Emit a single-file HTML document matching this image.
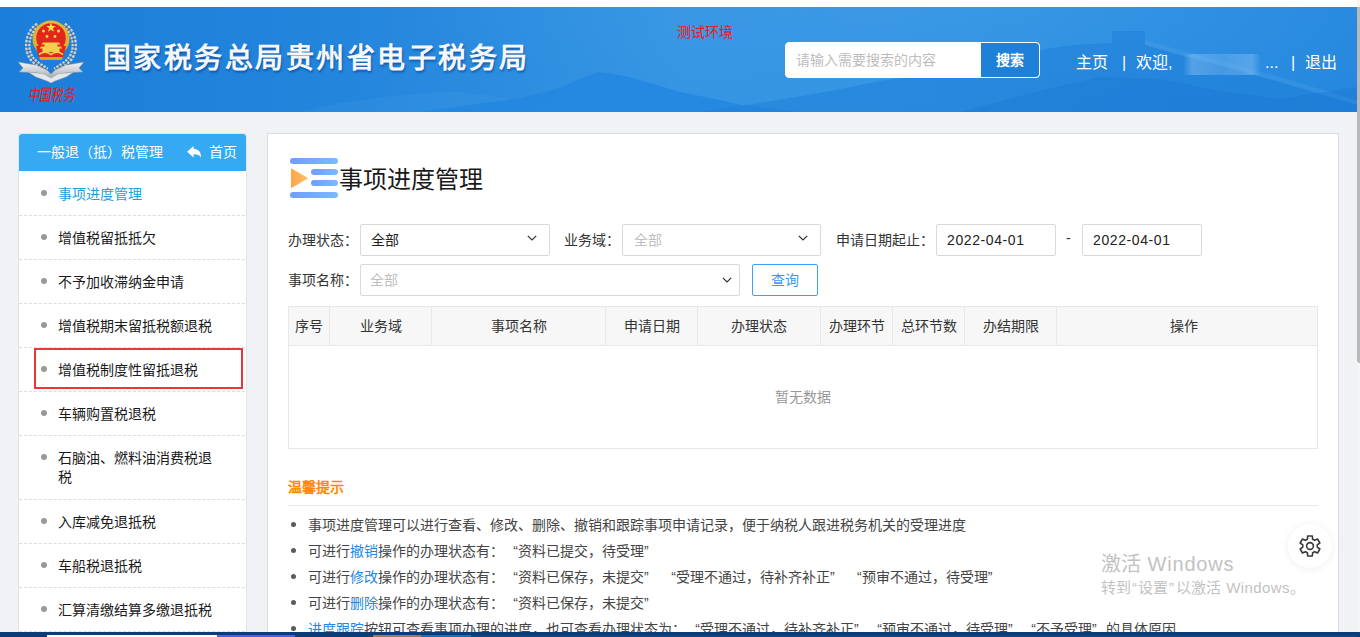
<!DOCTYPE html>
<html lang="zh-CN">
<head>
<meta charset="utf-8">
<title>国家税务总局贵州省电子税务局</title>
<style>
*{box-sizing:border-box;margin:0;padding:0}
html,body{width:1360px;height:637px;overflow:hidden}
body{position:relative;background:#f0f2f5;font-family:"Liberation Sans",sans-serif;font-size:14px;color:#333}
.abs{position:absolute}
#topstrip{left:0;top:0;width:1360px;height:7px;background:#fff}
#header{left:0;top:7px;width:1357px;height:105px;overflow:hidden;background:linear-gradient(90deg,#1b7ed9 0%,#2385dc 25%,#3695e3 50%,#3494e3 65%,#2a8ce0 85%,#2588de 100%)}
#header svg.bg{position:absolute;left:0;top:0}
#title{left:102.500px;top:37px;height:44px;line-height:44px;font-size:28px;font-weight:bold;color:#f5f7fb;letter-spacing:2.500px;white-space:nowrap;text-shadow:1px 2px 2px rgba(0,40,110,.45)}
#env{left:677px;top:24px;font-size:14px;line-height:16px;color:#e31b23;white-space:nowrap}
#search{left:785px;top:42px;width:255px;height:36px;border-radius:4px;background:#fff;overflow:hidden;border:1px solid #fff}
#search .ph{position:absolute;left:10px;top:0;line-height:34px;font-size:14px;color:#bdbdbd;white-space:nowrap}
#search .btn{position:absolute;left:195px;top:0;width:58px;height:34px;background:#1f80d8;color:#fff;font-weight:bold;font-size:14px;line-height:34px;text-align:center;border-radius:0 3px 3px 0}
.nav{color:#fff;font-size:16px;line-height:20px;top:52.500px;white-space:nowrap}
#blur{left:1183px;top:54px;width:78px;height:21px;background:linear-gradient(90deg,rgba(130,190,242,0),rgba(130,190,242,.5) 12%,rgba(120,184,240,.38) 50%,rgba(130,190,242,.5) 88%,rgba(130,190,242,0));border-radius:3px}
#scroll{left:1357px;top:0;width:3px;height:632px;background:#f4f5f7}
#scroll i{position:absolute;left:0;top:7px;width:3px;height:356px;background:#b9b9b9;border-radius:0 0 0 3px}
/* sidebar */
#side{left:18px;top:133px;width:229px;height:520px;background:#fff;border:1px solid #e2e4e8}
#sidehd{left:19px;top:134px;width:227px;height:37px;background:#35aaf2;border-radius:3px 3px 0 0;color:#fff;line-height:37px;font-size:14px;white-space:nowrap}
#sidehd .t{position:absolute;left:18px;top:0}
#sidehd .h{position:absolute;left:190px;top:0}
#sidehd svg{position:absolute;left:167px;top:11px}
.mi{left:19px;width:226px;height:44px;margin-top:1px;border-bottom:1px dashed #dcdcdc;line-height:19px;font-size:14px;color:#1a1a1a}
.mi b{position:absolute;left:22px;top:18px;width:6px;height:6px;border-radius:50%;background:#999}
.mi span{position:absolute;left:39px;top:13px;width:160px}
.mi.act span{color:#1ba1d6}
#redbox{left:34px;top:348px;width:209px;height:41px;border:2px solid #ee3538}
/* main */
#main{left:267px;top:133px;width:1072px;height:520px;background:#fff;border:1px solid #d8dbe1}
#h1{left:339px;top:162px;font-size:24px;line-height:36px;color:#1a1a1a;white-space:nowrap}
.lbl{font-size:14px;line-height:32px;color:#333;white-space:nowrap}
.inp{height:32px;border:1px solid #d9d9d9;border-radius:2px;background:#fff;font-size:14px;line-height:30px;color:#222;padding-left:10px;white-space:nowrap}
.inp.dis{color:#bfbfbf}
.inp svg{position:absolute;right:11.500px;top:9.200px}
#qbtn{left:752px;top:264px;width:66px;height:32px;border:1px solid #409eff;border-radius:2px;color:#3a97f0;font-size:14px;line-height:30px;text-align:center;background:#fff}
#tbl{left:288px;top:306px;width:1030px;height:143px;border:1px solid #e8e8e8;background:#fff}
#thead{left:289px;top:307px;width:1028px;height:39px;background:#f7f7f7;border-bottom:1px solid #e8e8e8}
.th{top:307px;height:38px;line-height:38px;text-align:center;font-size:14px;color:#333;border-right:1px solid #e8e8e8;white-space:nowrap}
#nodata{left:288px;top:387px;width:1030px;text-align:center;font-size:14px;line-height:20px;color:#999}
#tipt{left:288px;top:477px;font-size:14px;line-height:20px;font-weight:bold;color:#ff8a00;white-space:nowrap}
#tipl{left:288px;top:505px;width:1030px;height:1px;background:#e8e8e8}
.li{left:308px;font-size:14px;line-height:26px;color:#444;white-space:nowrap}
.li a{color:#1e88e5;text-decoration:none}
q{display:inline-block;width:14px;quotes:none}q:before,q:after{content:none}.ql{text-align:right}.qr{text-align:left}
.dot{left:291px;width:5px;height:5px;border-radius:50%;background:#5c5c5c;margin-top:-1px}
#gear{left:1288px;top:524px;width:44px;height:44px;border-radius:50%;background:#fff;box-shadow:0 1px 8px rgba(0,0,0,.07)}
#gear svg{position:absolute;left:10px;top:10px}
.wm{color:#c2c2c2;white-space:nowrap}
#bottom{left:0;top:632px;width:1360px;height:5px;background:#0c3c78}
#bottom i{position:absolute;top:3px;height:2px}
</style>
</head>
<body>
<div id="topstrip" class="abs"></div>
<div id="header" class="abs">
  <svg class="bg" width="1357" height="105" viewBox="0 0 1357 105">
    <defs>
      <radialGradient id="hv" cx="0.5" cy="0" r="0.5" gradientTransform="translate(0 0) scale(1 2)"><stop offset="0" stop-color="#4aa2ea" stop-opacity=".34"/><stop offset=".6" stop-color="#4aa2ea" stop-opacity=".12"/><stop offset="1" stop-color="#4aa2ea" stop-opacity="0"/></radialGradient>
    </defs>
    <rect x="400" y="0" width="1157" height="105" fill="url(#hv)"/>
    <path d="M300 105 L340 96 L400 88 L450 84 L500 90 L540 98 L580 105 Z" fill="#4b9fe6" opacity=".18"/>
    <path d="M421 105 L470 98 L520 91 L560 81 L580 72 L598 65 L620 68 L640 73 L680 85 L720 93 L741 98 L800 105 Z" fill="#2286e0" opacity=".75"/>
    <path d="M700 105 L760 96 L820 86 L880 74 L940 66 L1000 56 L1045 42 L1075 38 L1112 36 L1112 24 L1145 24 L1145 38 L1180 48 L1230 61 L1290 78 L1340 93 L1357 98 L1357 105 Z" fill="#1f7fd8" opacity=".55"/>
    <path d="M1145 38 L1180 48 L1230 61 L1290 78 L1340 93 L1357 98 L1357 94 L1340 88 L1290 73 L1230 56 L1180 43 L1145 33 Z" fill="#6db2ee" opacity=".18"/>
    <path d="M960 105 L1040 84 L1100 70 L1160 72 L1220 84 L1280 92 L1357 80 L1357 105 Z" fill="#1a76d0" opacity=".35"/>
  </svg>
</div>
<svg id="emblem" class="abs" style="left:14px;top:13px" width="74" height="92" viewBox="0 0 74 92">
  <defs>
    <linearGradient id="sil" x1="0" y1="0" x2="0" y2="1"><stop offset="0" stop-color="#f4f4f4"/><stop offset=".5" stop-color="#c9cdd2"/><stop offset="1" stop-color="#8e959c"/></linearGradient>
    <radialGradient id="gold" cx=".5" cy=".4" r=".6"><stop offset="0" stop-color="#f6d65a"/><stop offset="1" stop-color="#d9a521"/></radialGradient>
  </defs>
  <!-- wreath -->
  <path d="M24 12 C13 19 10 37 19 47 C23 51 28 54 33 57" fill="none" stroke="#cfd4d9" stroke-width="5.500" stroke-dasharray="2.400 1.300" stroke-linecap="butt"/>
  <path d="M50 12 C61 19 64 37 55 47 C51 51 46 54 41 57" fill="none" stroke="#cfd4d9" stroke-width="5.500" stroke-dasharray="2.400 1.300" stroke-linecap="butt"/>
  <path d="M24 12 C13 19 10 37 19 47 C23 51 28 54 33 57" fill="none" stroke="#48525a" stroke-width="1.200" opacity=".6"/>
  <path d="M50 12 C61 19 64 37 55 47 C51 51 46 54 41 57" fill="none" stroke="#48525a" stroke-width="1.200" opacity=".6"/>
  <!-- ribbon -->
  <path d="M4 49 L22 52 L33 57 L37 61 L41 57 L52 52 L70 49 L65 55 L69 59 L52 60 L43 65 L37 68 L31 65 L22 60 L5 59 L9 55 Z" fill="url(#sil)" stroke="#7d858c" stroke-width=".5"/>
  <path d="M14 59 L30 61 L37 65 L44 61 L60 59 L52 64 L41 68 L37 70 L33 68 L22 64 Z" fill="#e6e8ea" stroke="#8a9299" stroke-width=".4"/>
  <!-- national emblem disc -->
  <circle cx="37" cy="26" r="18.500" fill="url(#gold)"/>
  <circle cx="37" cy="25" r="14.800" fill="#e3261c"/>
  <path d="M22 33 H52 L49 45 H25 Z" fill="#e3261c"/>
  <path d="M25 44 H49 L47.500 47 H26.500 Z" fill="#d9a521"/>
  <!-- stars -->
  <path d="M37 9.500 l1.200 3.500 3.700 .1 -3 2.200 1.100 3.500 -3 -2.100 -3 2.100 1.100 -3.500 -3 -2.200 3.700 -.1z" fill="#f8dc4a"/>
  <circle cx="29.500" cy="18" r="1.500" fill="#f8dc4a"/><circle cx="44.500" cy="18" r="1.500" fill="#f8dc4a"/>
  <circle cx="33" cy="23.500" r="1.400" fill="#f8dc4a"/><circle cx="41" cy="23.500" r="1.400" fill="#f8dc4a"/>
  <!-- tiananmen -->
  <path d="M29 29.500 h16 l1.500 2 h-19z M30.500 31.500 h13 v2 h-13z M27 33.500 h20 l1.200 2 h-22.400z M28.500 35.500 h17 v3.500 h-17z" fill="#f3cf4b"/>
  <path d="M25 41.500 c4 -3 8 -3 12 0 c4 -3 8 -3 12 0" fill="none" stroke="#f3cf4b" stroke-width="1.600"/>
  <!-- calligraphy text -->
  <text transform="translate(37 88) scale(.86 1.25)" x="0" y="0" text-anchor="middle" font-family="Liberation Serif, serif" font-size="13.500" font-style="italic" fill="#e61a1e" letter-spacing=".6">中国税务</text>
</svg>
<div id="title" class="abs">国家税务总局贵州省电子税务局</div>
<div id="env" class="abs">测试环境</div>
<div id="search" class="abs"><span class="ph">请输入需要搜索的内容</span><span class="btn">搜索</span></div>
<div class="abs nav" style="left:1076px">主页</div>
<div class="abs nav" style="left:1122px">|</div>
<div class="abs nav" style="left:1136px">欢迎,</div>
<div id="blur" class="abs"></div>
<div class="abs nav" style="left:1265px">...</div>
<div class="abs nav" style="left:1291px">|</div>
<div class="abs nav" style="left:1305px">退出</div>
<div id="scroll" class="abs"><i></i></div>

<div id="side" class="abs"></div>
<div id="sidehd" class="abs"><span class="t">一般退（抵）税管理</span>
  <svg width="16" height="14" viewBox="0 0 16 14"><path fill="#fff" d="M1.100 6.700 L7.600 1 V3.800 C12.200 4 15.300 7 14.900 12.500 C13.600 10.100 11.500 9.300 7.600 9.300 V12.400 Z"/></svg>
  <span class="h">首页</span></div>
<div class="abs mi act" style="top:171px"><b></b><span>事项进度管理</span></div>
<div class="abs mi" style="top:215px"><b></b><span>增值税留抵抵欠</span></div>
<div class="abs mi" style="top:259px"><b></b><span>不予加收滞纳金申请</span></div>
<div class="abs mi" style="top:303px"><b></b><span>增值税期末留抵税额退税</span></div>
<div class="abs mi" style="top:347px"><b></b><span>增值税制度性留抵退税</span></div>
<div class="abs mi" style="top:391px"><b></b><span>车辆购置税退税</span></div>
<div class="abs mi" style="top:435px;height:64px"><b></b><span>石脑油、燃料油消费税退税</span></div>
<div class="abs mi" style="top:499px"><b></b><span>入库减免退抵税</span></div>
<div class="abs mi" style="top:543px"><b></b><span>车船税退抵税</span></div>
<div class="abs mi" style="top:587px"><b></b><span>汇算清缴结算多缴退抵税</span></div>
<div id="redbox" class="abs"></div>

<div id="main" class="abs"></div>
<svg class="abs" style="left:289px;top:157px" width="50" height="42" viewBox="0 0 50 42">
  <defs>
    <linearGradient id="gb" x1="0" y1="0" x2="1" y2="0"><stop offset="0" stop-color="#6f9dfb"/><stop offset="1" stop-color="#7cbaff"/></linearGradient>
    <linearGradient id="go" x1="0" y1="0" x2="1" y2="0"><stop offset="0" stop-color="#ffa648"/><stop offset="1" stop-color="#ffbd6c"/></linearGradient>
  </defs>
  <rect x="1" y="1" width="48" height="6" rx="3" fill="url(#gb)"/>
  <rect x="22" y="12" width="27" height="6" rx="3" fill="url(#gb)"/>
  <rect x="22" y="23" width="27" height="6" rx="3" fill="url(#gb)"/>
  <rect x="1" y="35" width="48" height="6" rx="3" fill="url(#gb)"/>
  <path d="M2.500 12 L18.500 21.200 L2.500 30.500 Z" fill="url(#go)" stroke="url(#go)" stroke-width="1" stroke-linejoin="round"/>
</svg>
<div id="h1" class="abs">事项进度管理</div>

<div class="abs lbl" style="left:288px;top:224px">办理状态：</div>
<div class="abs inp" style="left:360px;top:224px;width:190px">全部<svg width="12" height="8" viewBox="0 0 12 8"><path d="M1.800 1.900 L6 5.900 L10.200 1.900" fill="none" stroke="#2e2e2e" stroke-width="1.200"/></svg></div>
<div class="abs lbl" style="left:564px;top:224px">业务域：</div>
<div class="abs inp dis" style="left:622px;top:224px;width:199px;padding-left:11px">全部<svg width="12" height="8" viewBox="0 0 12 8"><path d="M1.800 1.900 L6 5.900 L10.200 1.900" fill="none" stroke="#2e2e2e" stroke-width="1.200"/></svg></div>
<div class="abs lbl" style="left:836px;top:224px">申请日期起止：</div>
<div class="abs inp" style="left:936px;top:224px;width:120px;letter-spacing:.6px">2022-04-01</div>
<div class="abs lbl" style="left:1066px;top:222px">-</div>
<div class="abs inp" style="left:1082px;top:224px;width:120px;letter-spacing:.6px">2022-04-01</div>

<div class="abs lbl" style="left:288px;top:264px">事项名称：</div>
<div class="abs inp dis" style="left:360px;top:264px;width:380px;padding-left:9px">全部<svg style="right:6.500px;top:11.200px" width="12" height="8" viewBox="0 0 12 8"><path d="M1.800 1.900 L6 5.900 L10.200 1.900" fill="none" stroke="#2e2e2e" stroke-width="1.200"/></svg></div>
<div id="qbtn" class="abs">查询</div>

<div id="tbl" class="abs"></div>
<div id="thead" class="abs"></div>
<div class="abs th" style="left:289px;width:41px">序号</div>
<div class="abs th" style="left:330px;width:102px">业务域</div>
<div class="abs th" style="left:432px;width:174px">事项名称</div>
<div class="abs th" style="left:606px;width:92px">申请日期</div>
<div class="abs th" style="left:698px;width:123px">办理状态</div>
<div class="abs th" style="left:821px;width:72px">办理环节</div>
<div class="abs th" style="left:893px;width:72px">总环节数</div>
<div class="abs th" style="left:965px;width:92px">办结期限</div>
<div class="abs th" style="left:1057px;width:253px;border-right:none">操作</div>
<div id="nodata" class="abs">暂无数据</div>

<div id="tipt" class="abs">温馨提示</div>
<div id="tipl" class="abs"></div>
<div class="abs dot" style="top:523px"></div>
<div class="abs li" style="top:512px">事项进度管理可以进行查看、修改、删除、撤销和跟踪事项申请记录，便于纳税人跟进税务机关的受理进度</div>
<div class="abs dot" style="top:549px"></div>
<div class="abs li" style="top:538px">可进行<a>撤销</a>操作的办理状态有：<q class="ql">“</q>资料已提交，待受理<q class="qr">”</q></div>
<div class="abs dot" style="top:575px"></div>
<div class="abs li" style="top:564px">可进行<a>修改</a>操作的办理状态有：<q class="ql">“</q>资料已保存，未提交<q class="qr">”</q> <q class="ql">“</q>受理不通过，待补齐补正<q class="qr">”</q> <q class="ql">“</q>预审不通过，待受理<q class="qr">”</q></div>
<div class="abs dot" style="top:601px"></div>
<div class="abs li" style="top:590px">可进行<a>删除</a>操作的办理状态有：<q class="ql">“</q>资料已保存，未提交<q class="qr">”</q></div>
<div class="abs dot" style="top:627px"></div>
<div class="abs li" style="top:616px"><a>进度跟踪</a>按钮可查看事项办理的进度，也可查看办理状态为：<q class="ql">“</q>受理不通过，待补齐补正<q class="qr">”</q><q class="ql">“</q>预审不通过，待受理<q class="qr">”</q><q class="ql">“</q>不予受理<q class="qr">”</q>的具体原因</div>

<div id="gear" class="abs"><svg width="24" height="24" viewBox="0 0 24 24" fill="none" stroke="#3a3a3a" stroke-width="1.600" stroke-linejoin="round"><circle cx="12" cy="12" r="3.400"/><path d="M14.62 5.18 L14.32 1.96 L9.68 1.96 L9.38 5.18 A7.30 7.30 0 0 0 7.41 6.33 L4.47 4.98 L2.15 8.99 L4.79 10.86 A7.30 7.30 0 0 0 4.79 13.14 L2.15 15.01 L4.47 19.02 L7.41 17.67 A7.30 7.30 0 0 0 9.38 18.82 L9.68 22.04 L14.32 22.04 L14.62 18.82 A7.30 7.30 0 0 0 16.59 17.67 L19.53 19.02 L21.85 15.01 L19.21 13.14 A7.30 7.30 0 0 0 19.21 10.86 L21.85 8.99 L19.53 4.98 L16.59 6.33 A7.30 7.30 0 0 0 14.62 5.18 Z"/></svg></div>
<div class="abs wm" style="left:1101px;top:551px;font-size:20px;line-height:26px">激活 <span style="letter-spacing:.8px;margin-left:1px">Windows</span></div>
<div class="abs wm" style="left:1101px;top:578px;font-size:15px;line-height:20px">转到<span style="margin:0 1px">“</span>设置<span style="margin:0 2px 0 1px">”</span>以激活 <span style="letter-spacing:.4px;margin-left:1px">Windows</span>。</div>

<div id="bottom" class="abs">
  <i style="left:47px;width:170px;background:#fff"></i>
  <i style="left:217px;width:78px;background:#4f5fe0"></i>
  <i style="left:373px;width:48px;background:#9c7a5c"></i>
  <i style="left:421px;width:50px;background:#1a6fb5"></i>
  <i style="left:471px;width:886px;background:#0e4583"></i>
</div>
</body>
</html>
